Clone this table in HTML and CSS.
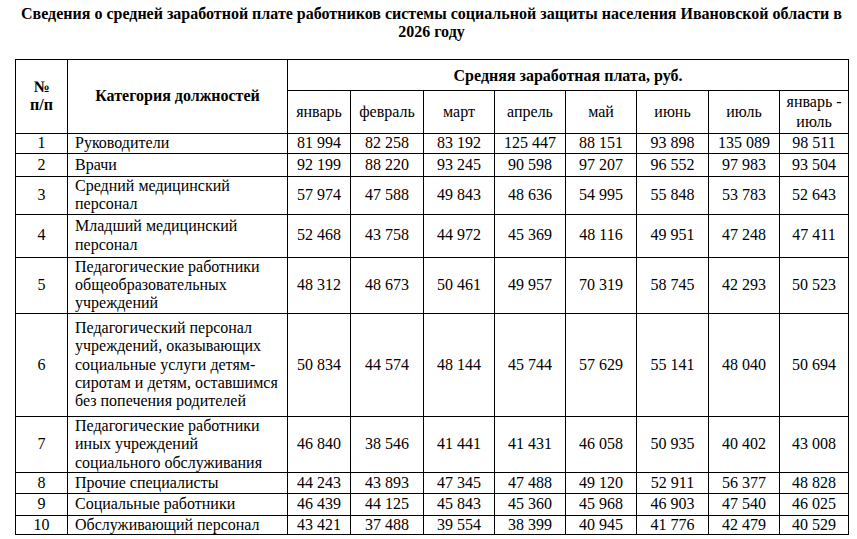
FILE: index.html
```html
<!DOCTYPE html>
<html>
<head>
<meta charset="utf-8">
<link rel="stylesheet" href="styles.css">
</head>
<body class="doc">
<div class="page">
  <h1 class="title">Сведения о средней заработной плате работников системы социальной защиты населения Ивановской области в 2026 году</h1>
  <table class="salary">
    <colgroup>
      <col class="c-num"><col class="c-cat"><col class="c-jan"><col class="c-feb"><col class="c-m"><col class="c-m"><col class="c-m"><col class="c-jun"><col class="c-m"><col class="c-tot">
    </colgroup>
    <thead>
      <tr class="h1">
        <th rowspan="2" class="hd">№<br>п/п</th>
        <th rowspan="2" class="hd">Категория должностей</th>
        <th colspan="8" class="hd group">Средняя заработная плата, руб.</th>
      </tr>
      <tr class="h2">
        <td class="mo">январь</td><td class="mo">февраль</td><td class="mo">март</td><td class="mo">апрель</td><td class="mo">май</td><td class="mo">июнь</td><td class="mo">июль</td><td class="mo">январь -<br>июль</td>
      </tr>
    </thead>
    <tbody>
      <tr class="r1"><td>1</td><td class="cat">Руководители</td><td>81 994</td><td>82 258</td><td>83 192</td><td>125 447</td><td>88 151</td><td>93 898</td><td>135 089</td><td>98 511</td></tr>
      <tr class="r2"><td>2</td><td class="cat">Врачи</td><td>92 199</td><td>88 220</td><td>93 245</td><td>90 598</td><td>97 207</td><td>96 552</td><td>97 983</td><td>93 504</td></tr>
      <tr class="r3"><td>3</td><td class="cat">Средний медицинский<br>персонал</td><td>57 974</td><td>47 588</td><td>49 843</td><td>48 636</td><td>54 995</td><td>55 848</td><td>53 783</td><td>52 643</td></tr>
      <tr class="r4"><td>4</td><td class="cat">Младший медицинский<br>персонал</td><td>52 468</td><td>43 758</td><td>44 972</td><td>45 369</td><td>48 116</td><td>49 951</td><td>47 248</td><td>47 411</td></tr>
      <tr class="r5"><td>5</td><td class="cat">Педагогические работники<br>общеобразовательных<br>учреждений</td><td>48 312</td><td>48 673</td><td>50 461</td><td>49 957</td><td>70 319</td><td>58 745</td><td>42 293</td><td>50 523</td></tr>
      <tr class="r6"><td>6</td><td class="cat">Педагогический персонал<br>учреждений, оказывающих<br>социальные услуги детям-<br>сиротам и детям, оставшимся<br>без попечения родителей</td><td>50 834</td><td>44 574</td><td>48 144</td><td>45 744</td><td>57 629</td><td>55 141</td><td>48 040</td><td>50 694</td></tr>
      <tr class="r7"><td>7</td><td class="cat">Педагогические работники<br>иных учреждений<br>социального обслуживания</td><td>46 840</td><td>38 546</td><td>41 441</td><td>41 431</td><td>46 058</td><td>50 935</td><td>40 402</td><td>43 008</td></tr>
      <tr class="r8"><td>8</td><td class="cat">Прочие специалисты</td><td>44 243</td><td>43 893</td><td>47 345</td><td>47 488</td><td>49 120</td><td>52 911</td><td>56 377</td><td>48 828</td></tr>
      <tr class="r9"><td>9</td><td class="cat">Социальные работники</td><td>46 439</td><td>44 125</td><td>45 843</td><td>45 360</td><td>45 968</td><td>46 903</td><td>47 540</td><td>46 025</td></tr>
      <tr class="r10"><td>10</td><td class="cat">Обслуживающий персонал</td><td>43 421</td><td>37 488</td><td>39 554</td><td>38 399</td><td>40 945</td><td>41 776</td><td>42 479</td><td>40 529</td></tr>
    </tbody>
  </table>
</div>
</body>
</html>
```
FILE: styles.css
```css
.doc {
  margin: 0;
  padding: 0;
  background: #ffffff;
}
.page {
  width: 833px;
  padding: 5px 0 0 15px;
  font-family: "Liberation Serif", "Times New Roman", serif;
  color: #000000;
}
.title {
  margin: 0;
  font-family: "Liberation Serif", "Times New Roman", serif;
  font-size: 16px;
  font-weight: bold;
  text-align: center;
  line-height: 18.4px;
  color: #000000;
}
.salary {
  margin-top: 17px;
  width: 833px;
  table-layout: fixed;
  border-collapse: collapse;
  font-family: "Liberation Serif", "Times New Roman", serif;
  color: #000000;
}
.c-num { width: 52px; }
.c-cat { width: 220px; }
.c-jan { width: 63px; }
.c-feb { width: 73px; }
.c-m { width: 71px; }
.c-jun { width: 72px; }
.c-tot { width: 69px; }
.salary th,
.salary td {
  border: 1px solid #000000;
  padding: 0 4px;
  text-align: center;
  vertical-align: middle;
  line-height: 18.4px;
  font-family: "Liberation Serif", "Times New Roman", serif;
  font-size: 16px;
  font-weight: normal;
  color: #000000;
}
.salary th.hd {
  font-weight: bold;
}
.salary td.cat {
  text-align: left;
  padding: 0 3px 0 7px;
}
.salary th.group {
  padding-top: 3px;
}
.salary td.mo {
  line-height: 20px;
}
.h1 { height: 31px; }
.h2 { height: 43px; }
.r1 { height: 20px; }
.r2 { height: 23px; }
.r3 { height: 37px; }
.r4 { height: 43px; }
.r5 { height: 56px; }
.r6 { height: 103px; }
.r7 { height: 56px; }
.r8 { height: 21px; }
.r9 { height: 22px; }
.r10 { height: 19px; }
```
